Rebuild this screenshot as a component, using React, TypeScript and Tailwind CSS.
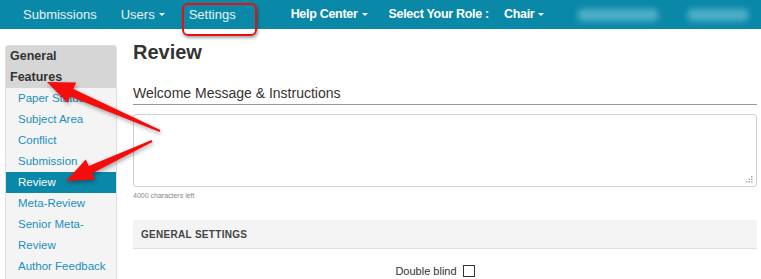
import React from 'react';

const font = { fontFamily: '"Liberation Sans", Arial, sans-serif' };

// builds a tapered arrow polygon from tail to tip
const arrowPoints = (tx: number, ty: number, hx: number, hy: number, headLen: number, headW: number, neckW: number, tailW: number) => {
  const dx = hx - tx;
  const dy = hy - ty;
  const len = Math.sqrt(dx * dx + dy * dy);
  const ux = dx / len;
  const uy = dy / len;
  const px = -uy;
  const py = ux;
  const nx = hx - ux * headLen;
  const ny = hy - uy * headLen;
  const pts = [
    [tx + px * tailW, ty + py * tailW],
    [nx + px * neckW, ny + py * neckW],
    [nx + px * headW, ny + py * headW],
    [hx, hy],
    [nx - px * headW, ny - py * headW],
    [nx - px * neckW, ny - py * neckW],
    [tx - px * tailW, ty - py * tailW],
  ];
  return pts.map(p => `${p[0].toFixed(1)},${p[1].toFixed(1)}`).join(' ');
};

const NavItem: React.FC<{ label: string; bold?: boolean; caret?: boolean }> = ({ label, bold, caret }) => (
  <span className={`flex shrink-0 items-center whitespace-nowrap ${bold ? 'text-[12.5px] font-bold tracking-[-0.3px] text-white' : 'text-[13px] text-white/90'}`}>
    {label}
    {caret && <span className="ml-[4px] inline-block w-0 h-0 border-l-[3px] border-r-[3px] border-t-[3px] border-l-transparent border-r-transparent border-t-white" />}
  </span>
);

const sideItems = ['Paper Status', 'Subject Area', 'Conflict', 'Submission', 'Review', 'Meta-Review', 'Senior Meta-Review', 'Author Feedback', 'Camera Ready'];

const App: React.FC = () => {
  return (
    <div className="relative w-[761px] h-[279px] overflow-hidden bg-white" style={font}>
      {/* top bar */}
      <div className="h-[29px] bg-[#0a88a8] flex items-center pl-[23px] whitespace-nowrap">
        <NavItem label="Submissions" />
        <span className="ml-[24px] shrink-0"><NavItem label="Users" caret /></span>
        <span className="ml-[24px] shrink-0"><NavItem label="Settings" /></span>
        <span className="ml-[55px] shrink-0"><NavItem label="Help Center" bold caret /></span>
        <span className="ml-[21px] shrink-0"><NavItem label="Select Your Role :" bold /></span>
        <span className="ml-[15px] shrink-0"><NavItem label="Chair" bold caret /></span>
        <span className="ml-[34px] shrink-0 w-[80px] h-[12px] rounded bg-[#4fb0c8] blur-[3px]" />
        <span className="ml-[30px] shrink-0 w-[60px] h-[12px] rounded bg-[#4fb0c8] blur-[3px]" />
      </div>

      <div className="flex">
        {/* sidebar */}
        <div className="ml-[5px] mt-[16px] w-[112px] h-[260px] shrink-0 bg-[#f4f4f4] border border-[#dedede] rounded-t-[3px] overflow-hidden">
          <div className="bg-[#d6d6d6] px-[4px] text-[12.5px] leading-[21px] font-bold text-[#333]">
            General<br />Features
          </div>
          {sideItems.map(item => (
            <div
              key={item}
              className={`pl-[12px] pr-[6px] text-[11.5px] leading-[21px] ${item === 'Review' ? 'bg-[#0a88a8] text-white' : 'text-[#1a8fbd]'}`}
            >
              {item}
            </div>
          ))}
        </div>

        {/* main */}
        <div className="ml-[16px] w-[624px] pt-[11px]">
          <h1 className="text-[20px] leading-[24px] font-bold text-[#333]">Review</h1>
          <div className="mt-[20px] text-[14px] leading-[18px] text-[#333] border-b border-[#999] pb-[2px]">
            Welcome Message &amp; Instructions
          </div>
          <div className="relative mt-[9px] h-[73px] border border-[#cfcfcf] rounded-[3px]">
            <svg className="absolute right-[3px] bottom-[3px]" width="7" height="7" viewBox="0 0 7 7">
              <rect x="5" y="0" width="1.5" height="1.5" fill="#aaa" />
              <rect x="2.5" y="2.5" width="1.5" height="1.5" fill="#aaa" />
              <rect x="5" y="2.5" width="1.5" height="1.5" fill="#aaa" />
              <rect x="0" y="5" width="1.5" height="1.5" fill="#aaa" />
              <rect x="2.5" y="5" width="1.5" height="1.5" fill="#aaa" />
              <rect x="5" y="5" width="1.5" height="1.5" fill="#aaa" />
            </svg>
          </div>
          <div className="mt-[4px] text-[7px] leading-[10px] text-[#888]">4000 characters left</div>
          <div className="mt-[19px] h-[29px] bg-[#f4f4f4] border-b border-[#e0e0e0] flex items-center pl-[8px] text-[10px] font-bold tracking-[0.3px] text-[#444]">
            GENERAL SETTINGS
          </div>
          <div className="mt-[14px] flex items-center justify-center pr-[20px]">
            <span className="text-[11px] text-[#333]">Double blind</span>
            <span className="ml-[6px] w-[12px] h-[12px] border border-[#333]" />
          </div>
        </div>
      </div>

      {/* annotations */}
      <div className="absolute left-[182px] top-[3px] w-[75px] h-[33px] border-2 border-[#e81010] rounded-[6px] shadow-[1px_2px_3px_rgba(0,0,0,0.35)]" />
      <svg className="absolute left-0 top-0" width="761" height="279" style={{ filter: 'drop-shadow(1px 2px 2px rgba(0,0,0,0.35))' }}>
        <polygon points={arrowPoints(160, 131, 47, 82, 27, 11, 4, 1)} fill="#f50d0d" />
        <polygon points={arrowPoints(152, 141, 66, 181, 27, 11, 4, 1)} fill="#f50d0d" />
      </svg>
    </div>
  );
};

export default App;
